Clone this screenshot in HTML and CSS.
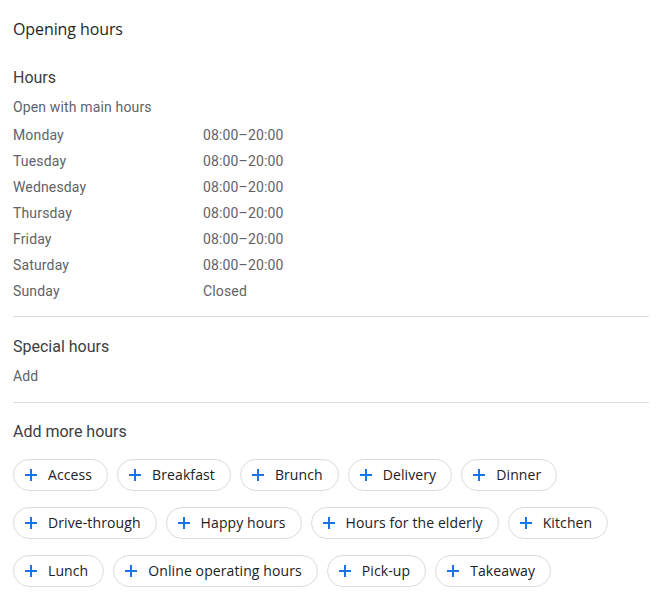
FILE: index.html
```html
<!DOCTYPE html>
<html lang="en">
<head>
<meta charset="utf-8">
<title>Opening hours</title>
<link rel="stylesheet" href="styles.css">
</head>
<body>
<main class="page">
  <h1 class="title">Opening hours</h1>

  <section class="section">
    <h2 class="heading">Hours</h2>
    <p class="sub">Open with main hours</p>
    <div class="days">
      <div class="day"><span class="dname">Monday</span><span>08:00–20:00</span></div>
      <div class="day"><span class="dname">Tuesday</span><span>08:00–20:00</span></div>
      <div class="day"><span class="dname">Wednesday</span><span>08:00–20:00</span></div>
      <div class="day"><span class="dname">Thursday</span><span>08:00–20:00</span></div>
      <div class="day"><span class="dname">Friday</span><span>08:00–20:00</span></div>
      <div class="day"><span class="dname">Saturday</span><span>08:00–20:00</span></div>
      <div class="day"><span class="dname">Sunday</span><span>Closed</span></div>
    </div>
  </section>

  <hr class="divider divider-first">

  <section class="section">
    <h2 class="heading">Special hours</h2>
    <p class="sub">Add</p>
  </section>

  <hr class="divider">

  <section class="section">
    <h2 class="heading">Add more hours</h2>
    <div class="chips">
      <button class="chip"><svg class="plus" viewBox="0 0 18 18"><path d="M9 3v12M3 9h12"/></svg>Access</button>
      <button class="chip"><svg class="plus" viewBox="0 0 18 18"><path d="M9 3v12M3 9h12"/></svg>Breakfast</button>
      <button class="chip"><svg class="plus" viewBox="0 0 18 18"><path d="M9 3v12M3 9h12"/></svg>Brunch</button>
      <button class="chip"><svg class="plus" viewBox="0 0 18 18"><path d="M9 3v12M3 9h12"/></svg>Delivery</button>
      <button class="chip"><svg class="plus" viewBox="0 0 18 18"><path d="M9 3v12M3 9h12"/></svg>Dinner</button>
      <button class="chip"><svg class="plus" viewBox="0 0 18 18"><path d="M9 3v12M3 9h12"/></svg>Drive-through</button>
      <button class="chip"><svg class="plus" viewBox="0 0 18 18"><path d="M9 3v12M3 9h12"/></svg>Happy hours</button>
      <button class="chip"><svg class="plus" viewBox="0 0 18 18"><path d="M9 3v12M3 9h12"/></svg>Hours for the elderly</button>
      <button class="chip"><svg class="plus" viewBox="0 0 18 18"><path d="M9 3v12M3 9h12"/></svg>Kitchen</button>
      <button class="chip"><svg class="plus" viewBox="0 0 18 18"><path d="M9 3v12M3 9h12"/></svg>Lunch</button>
      <button class="chip"><svg class="plus" viewBox="0 0 18 18"><path d="M9 3v12M3 9h12"/></svg>Online operating hours</button>
      <button class="chip"><svg class="plus" viewBox="0 0 18 18"><path d="M9 3v12M3 9h12"/></svg>Pick-up</button>
      <button class="chip"><svg class="plus" viewBox="0 0 18 18"><path d="M9 3v12M3 9h12"/></svg>Takeaway</button>
    </div>
  </section>
</main>
</body>
</html>
```

FILE: styles.css
```css
* { box-sizing: border-box; }

html, body {
  margin: 0;
  padding: 0;
  background: #ffffff;
}

body {
  font-family: Roboto, "Liberation Sans", Arial, sans-serif;
  color: #3c4043;
}

.page {
  width: 659px;
  padding: 17px 10px 0 13px;
}

.title {
  margin: 0;
  font-family: "Open Sans", Roboto, sans-serif;
  font-size: 16px;
  font-weight: 500;
  line-height: 24px;
  color: #1f1f1f;
  letter-spacing: -0.1px;
}

.section {
  display: flex;
  flex-direction: column;
}

.title + .section { margin-top: 25px; }

.heading {
  margin: 0;
  font-size: 16px;
  font-weight: 400;
  line-height: 24px;
  color: #3c4043;
}

.sub {
  margin: 7px 0 0;
  font-size: 14px;
  line-height: 20px;
  color: #5f6368;
  letter-spacing: 0.15px;
}

.days {
  margin-top: 5px;
  display: flex;
  flex-direction: column;
}

.day {
  display: grid;
  grid-template-columns: 190px auto;
  font-size: 14px;
  line-height: 26px;
  color: #5f6368;
  letter-spacing: 0.15px;
}

.divider {
  border: 0;
  border-top: 1px solid #dadce0;
  margin: 16px 0 17px;
  height: 0;
}

.divider-first { margin-top: 12px; margin-bottom: 18px; }

.chips {
  margin-top: 15px;
  display: flex;
  flex-wrap: wrap;
  column-gap: 9px;
  row-gap: 16px;
}

.chip {
  display: inline-flex;
  align-items: center;
  gap: 8px;
  height: 32px;
  padding: 0 15px 2px 8px;
  border: 1px solid #dadce0;
  border-radius: 16px;
  background: #ffffff;
  font-family: "Open Sans", Roboto, sans-serif;
  font-size: 14px;
  font-weight: 500;
  color: #202124;
  letter-spacing: 0.1px;
}

.plus {
  width: 18px;
  height: 18px;
  fill: none;
  stroke: #1a73e8;
  stroke-width: 2;
  margin-top: 2px;
}
```
